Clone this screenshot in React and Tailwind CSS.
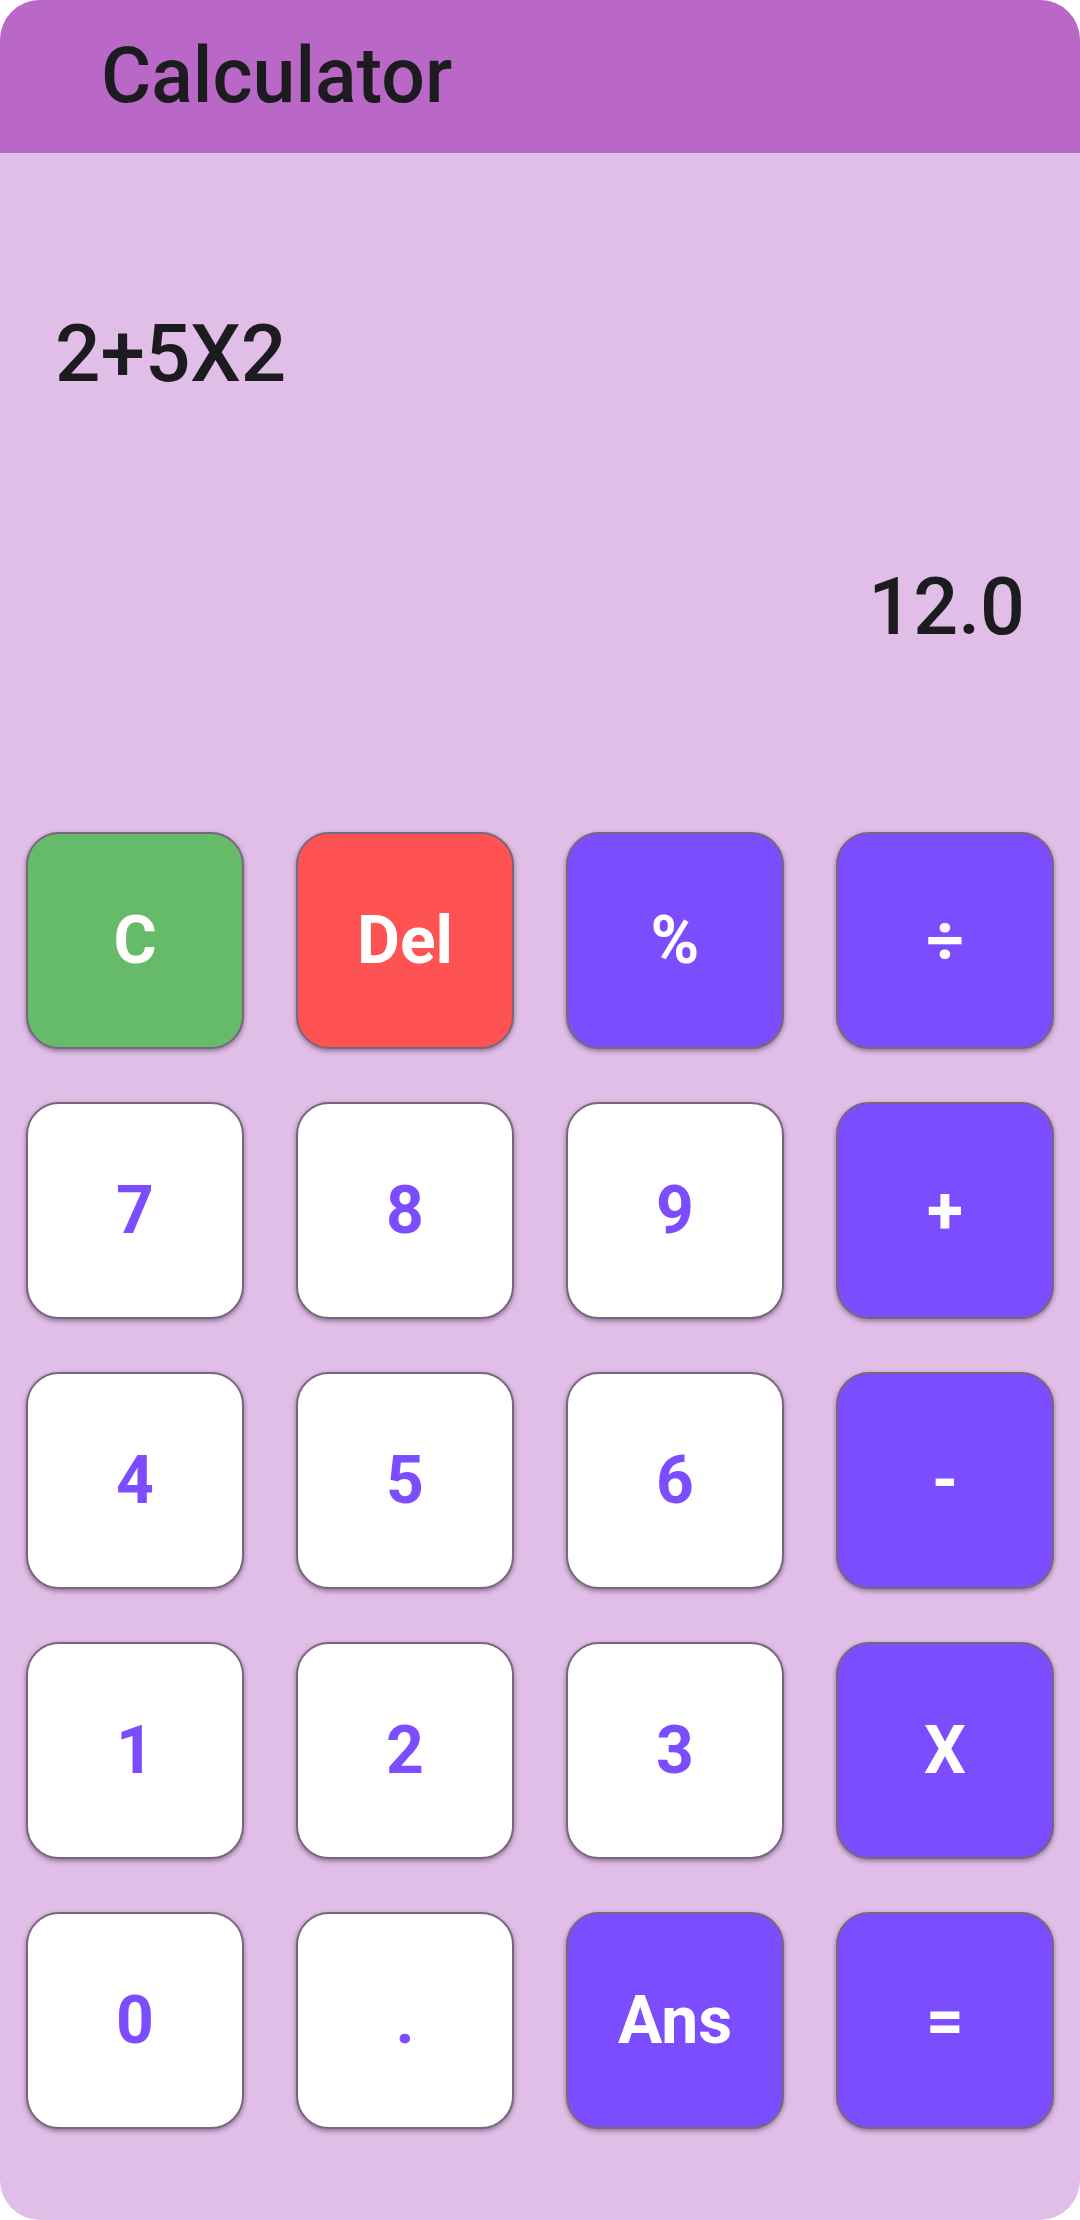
import React from "react";

// ─── Keypad data ──────────────────────────────────────────────────────────────

const KEYS = [
  { label: "C", kind: "clear" },
  { label: "Del", kind: "del" },
  { label: "%", kind: "op" },
  { label: "÷", kind: "op" },
  { label: "7", kind: "num" },
  { label: "8", kind: "num" },
  { label: "9", kind: "num" },
  { label: "+", kind: "op" },
  { label: "4", kind: "num" },
  { label: "5", kind: "num" },
  { label: "6", kind: "num" },
  { label: "-", kind: "op" },
  { label: "1", kind: "num" },
  { label: "2", kind: "num" },
  { label: "3", kind: "num" },
  { label: "X", kind: "op" },
  { label: "0", kind: "num" },
  { label: ".", kind: "num" },
  { label: "Ans", kind: "op" },
  { label: "=", kind: "op" },
];

const KIND_STYLES = {
  clear: "bg-[#66BB6A] text-white",
  del: "bg-[#FF5252] text-white",
  op: "bg-[#7C4DFF] text-white",
  num: "bg-white text-[#7C4DFF]",
};

function Key({ label, kind }) {
  return (
    <button
      className={`h-[217px] rounded-[33px] border-2 border-[#76687a]
                  shadow-[0_2px_5px_rgba(40,20,50,0.45)] flex items-center justify-center
                  text-[66px] font-bold leading-none ${KIND_STYLES[kind]}`}
    >
      {label}
    </button>
  );
}

// ─── Page ─────────────────────────────────────────────────────────────────────

export default function App() {
  return (
    <div
      className="w-[1080px] h-[2220px] bg-white"
      style={{ fontFamily: "Roboto, 'Noto Sans', sans-serif" }}
    >
      <div className="h-full rounded-[40px] overflow-hidden bg-[#E1BEE7] flex flex-col">
        {/* Top bar */}
        <div className="h-[153px] bg-[#BA68C8] flex items-center pl-[101px] shrink-0">
          <h1 className="text-[77px] leading-none font-medium text-[#1C1B1F]">
            Calculator
          </h1>
        </div>

        {/* Display */}
        <div className="flex flex-col px-[55px] pt-[161px] text-[#1C1B1F] font-medium">
          <div className="text-[80px] leading-none">2+5X2</div>
          <div className="text-[79px] leading-none text-right mt-[174px]">
            12.0
          </div>
        </div>

        {/* Keypad */}
        <div className="grid grid-cols-4 gap-x-[52px] gap-y-[53px] px-[26px] mt-[185px]">
          {KEYS.map((k) => (
            <Key key={k.label} {...k} />
          ))}
        </div>
      </div>
    </div>
  );
}
